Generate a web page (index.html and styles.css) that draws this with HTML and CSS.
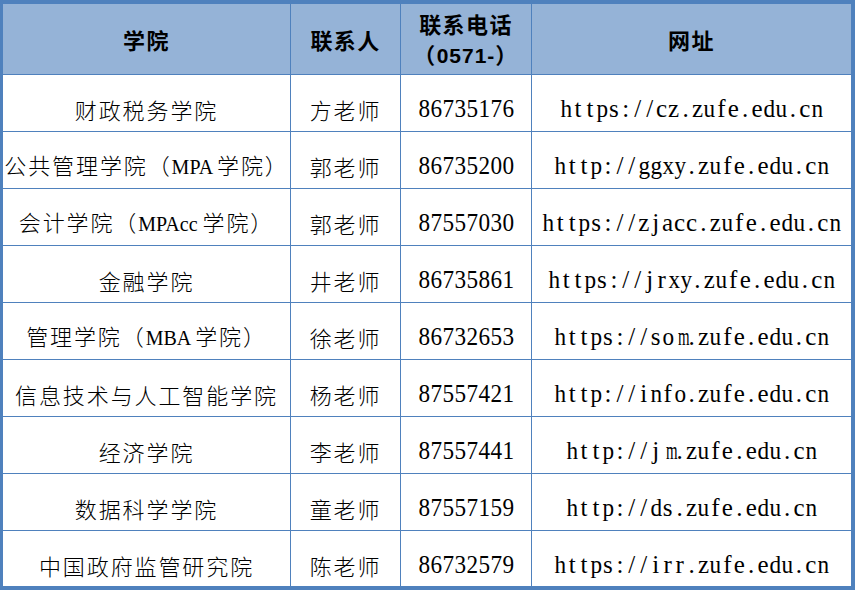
FILE: index.html
```html
<!DOCTYPE html>
<html lang="zh-CN">
<head>
<meta charset="utf-8">
<title>学院联系方式</title>
<link rel="stylesheet" href="styles.css">
</head>
<body>
<div class="sheet">
  <div class="cell head"><span>学院</span></div>
  <div class="cell head"><span>联系人</span></div>
  <div class="cell head two"><span>联系电话</span><span>（<span class="hnum">0571-</span>）</span></div>
  <div class="cell head last"><span>网址</span></div>

  <div class="cell"><span>财政税务学院</span></div>
  <div class="cell"><span>方老师</span></div>
  <div class="cell"><span class="mono">86735176</span></div>
  <div class="cell last"><span class="mono">https://cz.zufe.edu.cn</span></div>

  <div class="cell"><span>公共管理学院（<span class="lt">MPA </span>学院）</span></div>
  <div class="cell"><span>郭老师</span></div>
  <div class="cell"><span class="mono">86735200</span></div>
  <div class="cell last"><span class="mono">http://ggxy.zufe.edu.cn</span></div>

  <div class="cell"><span>会计学院（<span class="lt">MPAcc </span>学院）</span></div>
  <div class="cell"><span>郭老师</span></div>
  <div class="cell"><span class="mono">87557030</span></div>
  <div class="cell last"><span class="mono">https://zjacc.zufe.edu.cn</span></div>

  <div class="cell"><span>金融学院</span></div>
  <div class="cell"><span>井老师</span></div>
  <div class="cell"><span class="mono">86735861</span></div>
  <div class="cell last"><span class="mono">https://jrxy.zufe.edu.cn</span></div>

  <div class="cell"><span>管理学院（<span class="lt">MBA </span>学院）</span></div>
  <div class="cell"><span>徐老师</span></div>
  <div class="cell"><span class="mono">86732653</span></div>
  <div class="cell last"><span class="mono">https://som.zufe.edu.cn</span></div>

  <div class="cell"><span>信息技术与人工智能学院</span></div>
  <div class="cell"><span>杨老师</span></div>
  <div class="cell"><span class="mono">87557421</span></div>
  <div class="cell last"><span class="mono">http://info.zufe.edu.cn</span></div>

  <div class="cell"><span>经济学院</span></div>
  <div class="cell"><span>李老师</span></div>
  <div class="cell"><span class="mono">87557441</span></div>
  <div class="cell last"><span class="mono">http://jm.zufe.edu.cn</span></div>

  <div class="cell"><span>数据科学学院</span></div>
  <div class="cell"><span>童老师</span></div>
  <div class="cell"><span class="mono">87557159</span></div>
  <div class="cell last"><span class="mono">http://ds.zufe.edu.cn</span></div>

  <div class="cell bottom"><span>中国政府监管研究院</span></div>
  <div class="cell bottom"><span>陈老师</span></div>
  <div class="cell bottom"><span class="mono">86732579</span></div>
  <div class="cell last bottom"><span class="mono">https://irr.zufe.edu.cn</span></div>
</div>
<script src="script.js"></script>
</body>
</html>
```

FILE: styles.css
```css
html, body {
  margin: 0;
  padding: 0;
  background: #ffffff;
}

.sheet {
  width: 855px;
  height: 590px;
  box-sizing: border-box;
  border-style: solid;
  border-color: #4f81bd;
  border-width: 4px 4px 4px 3px;
  display: grid;
  grid-template-columns: 288px 110px 131px 319px;
  grid-template-rows: 71px repeat(8, 57px) 55px;
  font-family: "Noto Sans CJK SC", sans-serif;
  color: #000;
}

.cell {
  box-sizing: border-box;
  border-right: 1px solid #4f81bd;
  border-bottom: 1px solid #4f81bd;
  display: flex;
  align-items: center;
  justify-content: center;
  padding-top: 11px;
  font-size: 22px;
  line-height: 26px;
  font-weight: 300;
  letter-spacing: 1.9px;
  white-space: nowrap;
}

.cell.last { border-right: none; }
.cell.bottom { border-bottom: none; padding-top: 12px; }

.head {
  background: #95b3d7;
  font-weight: 700;
  padding-top: 0;
  letter-spacing: 1.4px;
}

.head.two {
  flex-direction: column;
  line-height: 30px;
}

.hnum {
  font-family: "Liberation Sans", sans-serif;
  font-weight: 700;
  font-size: 21px;
  letter-spacing: 1px;
}

.lt {
  font-family: "Liberation Serif", serif;
  font-size: 20px;
  font-weight: 400;
  letter-spacing: 0;
}

.mono {
  font-family: "Liberation Serif", serif;
  font-size: 25px;
  font-weight: 400;
  letter-spacing: 0;
}

.ch {
  display: inline-block;
  width: 11.95px;
  text-align: center;
}

.g {
  display: inline-block;
  transform-origin: 50% 50%;
}
```

FILE: script.js
```js
document.querySelectorAll('.mono').forEach(function (el) {
  var text = el.textContent;
  el.textContent = '';
  Array.from(text).forEach(function (c) {
    var s = document.createElement('span');
    s.className = 'ch';
    var g = document.createElement('span');
    g.className = 'g';
    g.textContent = c;
    s.appendChild(g);
    el.appendChild(s);
  });
  el.querySelectorAll('.g').forEach(function (g) {
    var w = g.getBoundingClientRect().width;
    var max = 11.6;
    if (w > max) {
      g.style.transform = 'scaleX(' + (max / w).toFixed(3) + ')';
    }
  });
});
```
